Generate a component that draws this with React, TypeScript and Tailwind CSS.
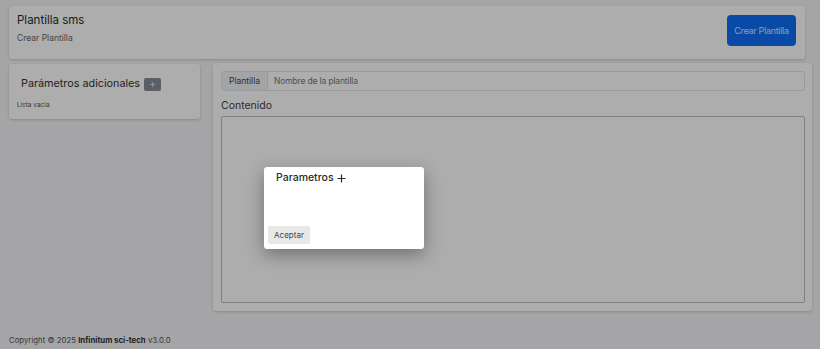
import React from "react";

const font = { fontFamily: "Inter, 'Noto Sans', sans-serif" };

const App = () => {
  return (
    <div className="relative h-[349px] w-[820px] overflow-hidden bg-[#f3f4f8] text-[#222]" style={font}>
      <div className="flex flex-col pt-[6px] pl-[9px] pr-[8px]">
        {/* header */}
        <div className="mr-[7px] flex h-[53px] items-start justify-between rounded-[3px] bg-white pl-[8px] pr-[9px] shadow-[0_1px_3px_rgba(0,0,0,0.18)]">
          <div className="pt-[6px]">
            <h1 className="text-[11.5px] leading-[16px] text-[#2b2b2b]">Plantilla sms</h1>
            <p className="mt-[5px] text-[8.5px] leading-[11px] text-[#666]">Crear Plantilla</p>
          </div>
          <button className="mt-[9px] h-[31px] w-[69px] rounded-[4px] bg-[#0f6ef6] text-[9px] tracking-[-0.3px] text-[#d5e3fb]">
            Crear Plantilla
          </button>
        </div>

        <div className="mt-[5px] flex items-start gap-[13px]">
          {/* left card */}
          <div className="h-[55px] w-[191px] rounded-[3px] bg-white pl-[8px] shadow-[0_1px_3px_rgba(0,0,0,0.18)]">
            <div className="flex items-center pt-[12px] pl-[4px]">
              <span className="text-[10.8px] leading-[16px] text-[#333]">Parámetros adicionales</span>
              <button className="ml-[4px] flex h-[13px] w-[17px] items-center justify-center rounded-[2px] bg-[#858b96] text-[11px] leading-none text-[#dfe1e4]">
                +
              </button>
            </div>
            <p className="mt-[9px] text-[6.5px] leading-[9px] text-[#555]">Lista vacia</p>
          </div>

          {/* right card */}
          <div className="-mt-[1px] h-[248px] flex-1 rounded-[3px] bg-white px-[8px] pt-[8px] shadow-[0_1px_3px_rgba(0,0,0,0.18)]">
            <div className="mr-[-1px] flex h-[20px] rounded-[3px] border border-[#e2e4e8] text-[8.5px]">
              <span className="flex w-[46px] items-center justify-center border-r border-[#e2e4e8] bg-[#f1f2f4] text-[#444]">
                Plantilla
              </span>
              <span className="flex items-center pl-[6px] tracking-[-0.15px] text-[#777]">Nombre de la plantilla</span>
            </div>
            <p className="mt-[8px] text-[10.5px] leading-[13px] text-[#444]">Contenido</p>
            <div className="mt-[4px] mr-[-1px] h-[187px] rounded-[2px] border border-[#bdbdbd]"></div>
          </div>
        </div>
      </div>

      <p className="absolute left-[9px] top-[334px] text-[7.8px] leading-[12px] text-[#555]">
        Copyright © 2025 <span className="font-bold text-[#333]">Infinitum sci-tech</span> v3.0.0
      </p>

      {/* modal backdrop */}
      <div className="absolute inset-0 bg-black/[0.32]"></div>
      <div className="absolute left-[264px] top-[167px] flex h-[82px] w-[160px] flex-col justify-between rounded-[3px] bg-white p-[4px] shadow-[0_6px_18px_rgba(0,0,0,0.35)]">
        <div className="flex items-center pl-[8px] text-[10.5px] leading-[14px] font-medium text-[#2a2a2a]">
          Parametros
          <svg className="ml-[3px]" width="9" height="9" viewBox="0 0 9 9" fill="none" stroke="#2a2a2a" strokeWidth="1.2">
            <path d="M4.5 0.5v8M0.5 4.5h8" />
          </svg>
        </div>
        <button className="mb-[1px] h-[18px] w-[42px] rounded-[2px] bg-[#e8e8e8] text-[8px] text-[#444]">Aceptar</button>
      </div>
    </div>
  );
};

export default App;
